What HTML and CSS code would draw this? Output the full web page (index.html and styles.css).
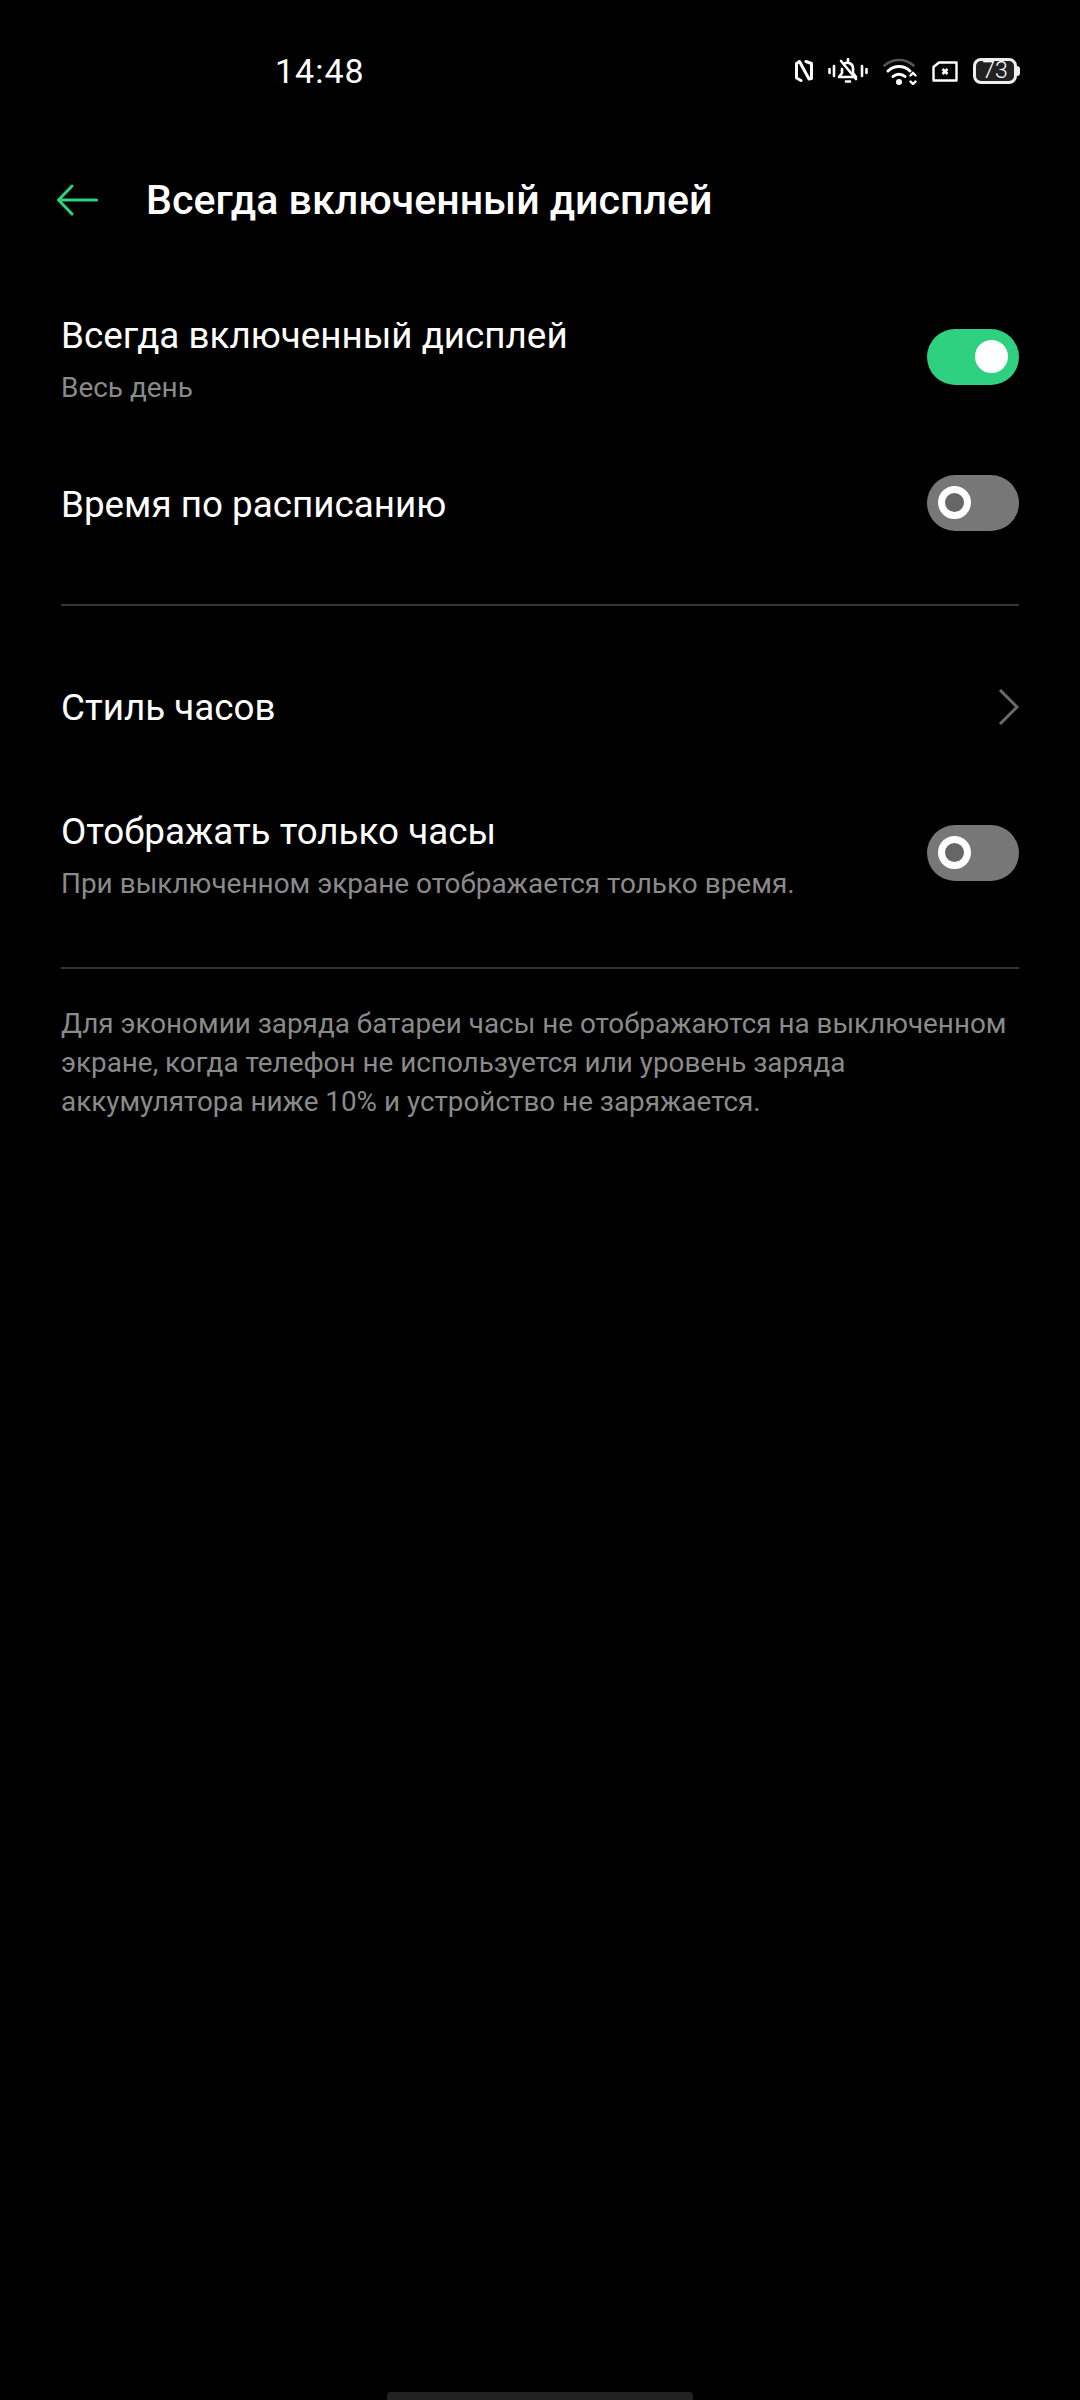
FILE: index.html
```html
<!DOCTYPE html>
<html lang="ru">

<head>
  <meta charset="UTF-8">
  <meta name="viewport" content="width=device-width, initial-scale=1.0">
  <title>Всегда включенный дисплей</title>
  <link rel="stylesheet" href="styles.css">
</head>

<body>
  <div class="screen">
    <div class="status">
      <span class="time">14:48</span>
      <div class="status-icons">
        <svg width="18" height="22" viewBox="0 0 18 22" fill="none" stroke="#fff" stroke-width="3" stroke-linecap="round" stroke-linejoin="round">
          <path d="M6 20.500 1.500 18V3.500L4.500 1.500 14 19l2.500-.5V3.500L11 1.500"/>
        </svg>
        <svg width="40" height="26" viewBox="0 0 40 26" fill="none" stroke="#fff" stroke-width="2.600" stroke-linecap="round" stroke-linejoin="round">
          <path d="M1.500 11v4M6 8v10M34 8v10M38.500 11v4"/>
          <path d="M16 6a5.500 5.500 0 0 1 9 4v5l3 4H11l3-4v-4"/>
          <path d="M13 3l15 18"/>
          <path d="M18 23.500h4M20 1v2"/>
        </svg>
        <svg width="34" height="27" viewBox="0 0 34 27" fill="none" stroke-linecap="round">
          <path d="M1.500 7.500a22 22 0 0 1 29 0" stroke="#555" stroke-width="2.600"/>
          <path d="M5 13a16 16 0 0 1 22 0" stroke="#fff" stroke-width="3"/>
          <path d="M10 18.500a9 9 0 0 1 12 0" stroke="#fff" stroke-width="3"/>
          <circle cx="16" cy="24" r="3" fill="#fff"/>
          <path d="M27.500 17.500l2.500-2.500 2.500 2.500M27.500 23.500l2.500 2.500 2.500-2.500" stroke="#fff" stroke-width="2.400"/>
        </svg>
        <svg width="26" height="21" viewBox="0 0 26 21" fill="none" stroke="#fff" stroke-width="2.400">
          <path d="M7 1.500h17.500v18H1.500V6z" stroke-linejoin="round"/>
          <path d="M10.500 8l5 5M15.500 8l-5 5" stroke-width="2.600"/>
        </svg>
        <div class="battery"><span>73</span></div>
      </div>
    </div>

    <div class="header">
      <svg class="back" width="41" height="32" viewBox="0 0 41 32" fill="none" stroke="#2fd07f" stroke-width="3" stroke-linecap="round" stroke-linejoin="round">
        <path d="M39.500 16H2M15 2 1.500 16 15 30"/>
      </svg>
      <h1>Всегда включенный дисплей</h1>
    </div>

    <div class="list list-top">
      <div class="row row-two">
        <div class="row-text">
          <div class="row-title">Всегда включенный дисплей</div>
          <div class="row-sub">Весь день</div>
        </div>
        <div class="switch on"></div>
      </div>
      <div class="row row-schedule">
        <div class="row-title row-title-low">Время по расписанию</div>
        <div class="switch"></div>
      </div>
    </div>

    <div class="line line-first"></div>

    <div class="list">
      <div class="row row-clock">
        <div class="row-title">Стиль часов</div>
        <svg class="chevron" width="22" height="36" viewBox="0 0 22 36" fill="none" stroke="#6a6a6a" stroke-width="3">
          <path d="M2 1l17 17L2 35"/>
        </svg>
      </div>
      <div class="row row-two">
        <div class="row-text">
          <div class="row-title">Отображать только часы</div>
          <div class="row-sub">При выключенном экране отображается только время.</div>
        </div>
        <div class="switch"></div>
      </div>
    </div>

    <div class="line line-second"></div>

    <p class="note">Для экономии заряда батареи часы не отображаются на выключенном экране, когда телефон не используется или уровень заряда аккумулятора ниже 10% и устройство не заряжается.</p>

    <div class="home-bar"></div>
  </div>
</body>

</html>
```

FILE: styles.css
```css
* {
  margin: 0;
  padding: 0;
  box-sizing: border-box;
}

body {
  background-color: #000;
  color: #fff;
  font-family: Roboto, "Noto Sans", sans-serif;
}

.screen {
  position: relative;
  width: 1080px;
  height: 2400px;
  overflow: hidden;
  padding: 0 61px;
}

.status {
  height: 142px;
  display: flex;
  align-items: center;
  justify-content: space-between;
  padding-left: 214px;
}

.time {
  font-size: 34px;
  letter-spacing: 1px;
}

.status-icons {
  display: flex;
  align-items: center;
  gap: 15px;
  margin-right: 2px;
}

.battery {
  position: relative;
  width: 44px;
  height: 26px;
  border: 3px solid #eee;
  border-radius: 8px;
  background-color: #222;
  font-size: 23px;
  font-weight: 300;
  line-height: 20px;
  text-align: center;
}

.battery::after {
  content: "";
  position: absolute;
  top: 5px;
  right: -6px;
  width: 3px;
  height: 10px;
  border-radius: 0 3px 3px 0;
  background-color: #eee;
}

.header {
  height: 116px;
  display: flex;
  align-items: center;
  gap: 48px;
  margin-left: -4px;
}

h1 {
  font-size: 41.100px;
  font-weight: 500;
}

.list {
  display: flex;
  flex-direction: column;
}

.list-top {
  padding-top: 29px;
}

.row {
  display: flex;
  align-items: center;
  justify-content: space-between;
}

.row-two {
  height: 140px;
}

.row-schedule {
  height: 152px;
}

.row-clock {
  height: 116px;
  margin-bottom: 17px;
}

.row-text {
  padding-top: 6px;
}

.row-title {
  font-size: 36.800px;
  line-height: 44px;
}

.row-title-low {
  padding-top: 4px;
}

.row-sub {
  font-size: 27.950px;
  line-height: 36px;
  margin-top: 12px;
  color: #8a8a8a;
}

.switch {
  position: relative;
  flex-shrink: 0;
  width: 92px;
  height: 56px;
  border-radius: 28px;
  background-color: #777;
}

.switch::after {
  content: "";
  box-sizing: border-box;
  position: absolute;
  top: 11px;
  left: 11px;
  width: 33px;
  height: 33px;
  border: 7px solid #fff;
  border-radius: 50%;
  background-color: #666;
}

.switch.on {
  background-color: #2fd07f;
}

.switch.on::after {
  left: 48px;
  background-color: #fff;
}

.chevron {
  margin: -3px -1px 0 0;
}

.line {
  height: 2px;
  background-color: #333;
}

.line-first {
  margin: 25px 0 44px;
}

.line-second {
  margin-top: 44px;
}

.note {
  margin-top: 35px;
  font-size: 27.850px;
  line-height: 39px;
  color: #8a8a8a;
}

.home-bar {
  position: absolute;
  left: 387px;
  bottom: 0;
  width: 306px;
  height: 8px;
  border-radius: 4px 4px 0 0;
  background-color: #222;
}
```
